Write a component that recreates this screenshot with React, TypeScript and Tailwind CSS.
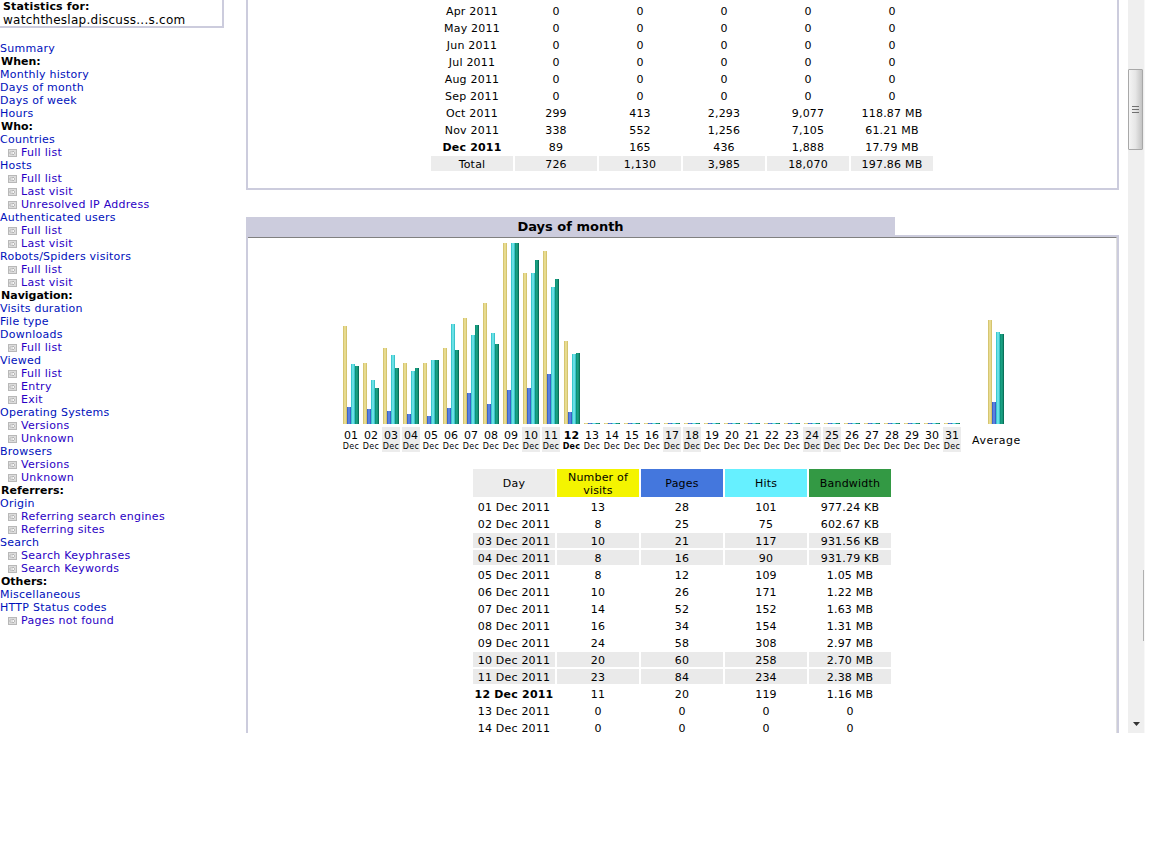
const font = { fontFamily: '"DejaVu Sans", Verdana, sans-serif' };

type MenuItem = { label: string; kind: "link" | "head" | "sub" };

const link = (label: string): MenuItem => ({ label, kind: "link" });
const head = (label: string): MenuItem => ({ label, kind: "head" });
const sub = (label: string): MenuItem => ({ label, kind: "sub" });

const menu: MenuItem[] = [
  link("Summary"),
  head("When:"),
  link("Monthly history"),
  link("Days of month"),
  link("Days of week"),
  link("Hours"),
  head("Who:"),
  link("Countries"),
  sub("Full list"),
  link("Hosts"),
  sub("Full list"),
  sub("Last visit"),
  sub("Unresolved IP Address"),
  link("Authenticated users"),
  sub("Full list"),
  sub("Last visit"),
  link("Robots/Spiders visitors"),
  sub("Full list"),
  sub("Last visit"),
  head("Navigation:"),
  link("Visits duration"),
  link("File type"),
  link("Downloads"),
  sub("Full list"),
  link("Viewed"),
  sub("Full list"),
  sub("Entry"),
  sub("Exit"),
  link("Operating Systems"),
  sub("Versions"),
  sub("Unknown"),
  link("Browsers"),
  sub("Versions"),
  sub("Unknown"),
  head("Referrers:"),
  link("Origin"),
  sub("Referring search engines"),
  sub("Referring sites"),
  link("Search"),
  sub("Search Keyphrases"),
  sub("Search Keywords"),
  head("Others:"),
  link("Miscellaneous"),
  link("HTTP Status codes"),
  sub("Pages not found"),
];

const monthly = [
  ["Apr 2011", "0", "0", "0", "0", "0"],
  ["May 2011", "0", "0", "0", "0", "0"],
  ["Jun 2011", "0", "0", "0", "0", "0"],
  ["Jul 2011", "0", "0", "0", "0", "0"],
  ["Aug 2011", "0", "0", "0", "0", "0"],
  ["Sep 2011", "0", "0", "0", "0", "0"],
  ["Oct 2011", "299", "413", "2,293", "9,077", "118.87 MB"],
  ["Nov 2011", "338", "552", "1,256", "7,105", "61.21 MB"],
  ["Dec 2011", "89", "165", "436", "1,888", "17.79 MB"],
  ["Total", "726", "1,130", "3,985", "18,070", "197.86 MB"],
];

const daily = [
  ["01 Dec 2011", "13", "28", "101", "977.24 KB"],
  ["02 Dec 2011", "8", "25", "75", "602.67 KB"],
  ["03 Dec 2011", "10", "21", "117", "931.56 KB"],
  ["04 Dec 2011", "8", "16", "90", "931.79 KB"],
  ["05 Dec 2011", "8", "12", "109", "1.05 MB"],
  ["06 Dec 2011", "10", "26", "171", "1.22 MB"],
  ["07 Dec 2011", "14", "52", "152", "1.63 MB"],
  ["08 Dec 2011", "16", "34", "154", "1.31 MB"],
  ["09 Dec 2011", "24", "58", "308", "2.97 MB"],
  ["10 Dec 2011", "20", "60", "258", "2.70 MB"],
  ["11 Dec 2011", "23", "84", "234", "2.38 MB"],
  ["12 Dec 2011", "11", "20", "119", "1.16 MB"],
  ["13 Dec 2011", "0", "0", "0", "0"],
  ["14 Dec 2011", "0", "0", "0", "0"],
];

const weekendRows = ["03", "04", "10", "11"];
const weekendCols = [3, 4, 10, 11, 17, 18, 24, 25, 31];

// bar heights in px: visits, pages, hits, bandwidth
const bars: number[][] = [
  [98, 17, 60, 58],
  [61, 15, 44, 36],
  [76, 13, 69, 56],
  [61, 10, 53, 56],
  [61, 8, 64, 64],
  [76, 16, 100, 74],
  [106, 31, 89, 99],
  [121, 20, 91, 80],
  [181, 34, 181, 181],
  [151, 36, 151, 164],
  [173, 50, 137, 145],
  [83, 12, 70, 71],
];

const barColors = [
  "bg-linear-to-r from-[#cdbb62] via-[#f1e69e] to-[#cbb960]",
  "bg-linear-to-r from-[#2f55c0] via-[#6a90ea] to-[#2c50b8]",
  "bg-linear-to-r from-[#14bcc4] via-[#7eeef2] to-[#14b4bc]",
  "bg-linear-to-r from-[#0a8a70] via-[#1ca888] to-[#04604c]",
];

function BarGroup({ heights, alignEnd }: { heights: number[]; alignEnd?: boolean }) {
  return (
    <div className={`flex h-[181px] items-end ${alignEnd ? "justify-end pr-px" : "justify-center"}`}>
      {heights.map((h, i) => (
        <div key={i} className={`w-[4px] ${barColors[i]}`} style={{ height: h }} />
      ))}
    </div>
  );
}

function SubIcon() {
  return (
    <svg width="9" height="8" viewBox="0 0 9 8" className="mr-[4px] shrink-0">
      <rect x="0" y="0" width="9" height="8" fill="#dcdcdc" />
      <rect x="0.5" y="0.5" width="8" height="7" fill="none" stroke="#b8b8b8" />
      <path d="M2 3h3V2l2 2-2 2V5H2z" fill="#f8f8f8" stroke="#909090" strokeWidth="0.5" />
    </svg>
  );
}

function Sidebar() {
  return (
    <aside className="w-[246px] shrink-0 text-[11px] leading-[13px]">
      <div className="h-[28px] w-[224px] border-r-2 border-b-2 border-[#ccccdd] pl-[3px]">
        <div className="font-bold tracking-[0.15px]">Statistics for:</div>
        <div className="mt-px whitespace-nowrap text-[12px] leading-[13px] tracking-[0.26px] text-black">watchtheslap.discuss...s.com</div>
      </div>
      <div className="mt-[14px]">
        {menu.map((item, i) => {
          if (item.kind === "head") {
            return <div key={i} className="h-[13px] pl-px font-bold text-black">{item.label}</div>;
          }
          if (item.kind === "sub") {
            return (
              <div key={i} className="flex h-[13px] items-center pl-[8px] tracking-[0.28px] text-[#2a00c4]">
                <SubIcon />
                <span>{item.label}</span>
              </div>
            );
          }
          return <div key={i} className="h-[13px] tracking-[0.25px] text-[#0011bb]">{item.label}</div>;
        })}
      </div>
    </aside>
  );
}

function MonthlyTable() {
  return (
    <table className="mx-auto border-separate border-spacing-[2px] text-[11px] leading-[13px] tracking-[0.2px] text-black">
      <tbody>
        {monthly.map((row) => {
          const isTotal = row[0] === "Total";
          const isCurrent = row[0] === "Dec 2011";
          return (
            <tr key={row[0]}>
              {row.map((cell, i) => (
                <td
                  key={i}
                  className={`h-[15px] w-[82px] p-0 pt-[2px] text-center ${isTotal ? "bg-[#ececec]" : ""} ${isCurrent && i === 0 ? "font-bold" : ""}`}
                >
                  {cell}
                </td>
              ))}
            </tr>
          );
        })}
      </tbody>
    </table>
  );
}

function DayChart() {
  const days = Array.from({ length: 31 }, (_, i) => i + 1);
  return (
    <div className="flex pl-[94px] pt-[5px]">
      {days.map((d) => {
        const label = String(d).padStart(2, "0");
        const today = d === 12;
        return (
          <div key={d} className={`mr-[2px] ${today ? "w-[19px]" : "w-[18px]"}`}>
            <BarGroup heights={bars[d - 1] ?? [1, 1, 1, 1]} alignEnd={today} />
            <div
              className={`mt-[3px] h-[25px] text-center ${weekendCols.includes(d) ? "bg-[#ececec]" : ""} ${today ? "font-bold" : ""}`}
            >
              <div className="pt-[2px] text-[11px] leading-[13px]">{label}</div>
              <div className="text-[8px] leading-[9px] tracking-[0.3px]">Dec</div>
            </div>
          </div>
        );
      })}
      <div className="ml-[9px] w-[48px]">
        <BarGroup heights={[104, 22, 92, 90]} />
        <div className="mt-[3px] h-[25px] whitespace-nowrap pt-[7px] text-center text-[11px] leading-[13px] tracking-[0.5px]">Average</div>
      </div>
    </div>
  );
}

function DayTable() {
  return (
    <table className="mx-auto mt-[15px] border-separate border-spacing-[2px] text-[11px] leading-[13px] tracking-[0.2px] text-black">
      <thead>
        <tr>
          <th className="h-[28px] w-[82px] bg-[#ececec] p-0 font-normal">Day</th>
          <th className="w-[82px] bg-[#f4f400] p-0 pt-px font-normal">Number of visits</th>
          <th className="w-[82px] bg-[#4477dd] p-0 font-normal">Pages</th>
          <th className="w-[82px] bg-[#66f0ff] p-0 font-normal">Hits</th>
          <th className="w-[82px] bg-[#339944] p-0 font-normal">Bandwidth</th>
        </tr>
      </thead>
      <tbody>
        {daily.map((row) => {
          const shaded = weekendRows.includes(row[0].slice(0, 2));
          return (
            <tr key={row[0]}>
              {row.map((cell, i) => (
                <td
                  key={i}
                  className={`h-[15px] p-0 pt-[2px] text-center ${shaded ? "bg-[#eaeaea]" : ""} ${row[0].startsWith("12") && i === 0 ? "font-bold" : ""}`}
                >
                  {cell}
                </td>
              ))}
            </tr>
          );
        })}
      </tbody>
    </table>
  );
}

function Scrollbar() {
  return (
    <div className="relative ml-[9px] flex h-[733px] w-[17px] shrink-0 flex-col items-start border-r border-[#f8f8f8] bg-[#efefef]">
      <div className="mt-[69px] flex h-[81px] w-[15px] items-center justify-center rounded-[1px] border border-[#a8a8a8] bg-linear-to-r from-[#f4f4f4] via-[#e6e6e6] to-[#c4c4c4]">
        <svg width="7" height="8" viewBox="0 0 7 8">
          <path d="M0 .5h7M0 3.5h7M0 6.5h7" stroke="#707070" strokeWidth="1" />
        </svg>
      </div>
      <div className="absolute right-0 top-[570px] h-[71px] w-px bg-[#b0b0b0]" />
      <svg width="7" height="4" viewBox="0 0 7 4" className="mt-auto mb-[7px] ml-[5px]">
        <path d="M0 0h7L3.5 4z" fill="#333" />
      </svg>
    </div>
  );
}

export default function App() {
  return (
    <div className="h-[864px] w-[1152px] overflow-hidden bg-white text-black" style={font}>
      <div className="flex h-[733px] overflow-hidden">
        <Sidebar />
        <main className="w-[873px] shrink-0">
          <section className="h-[190px] border-x-2 border-b-2 border-[#ccccdd] pr-px pt-px">
            <MonthlyTable />
          </section>
          <h2 className="mt-[27px] h-[18px] w-[649px] bg-[#ccccdd] text-center text-[13px] font-bold leading-[20px]">
            Days of month
          </h2>
          <section className="border-x-2 border-t-2 border-[#ccccdd]">
            <div className="border-t border-r border-t-[#808080] border-r-[#e0e0e0]">
              <DayChart />
              <DayTable />
            </div>
          </section>
        </main>
        <Scrollbar />
      </div>
    </div>
  );
}
